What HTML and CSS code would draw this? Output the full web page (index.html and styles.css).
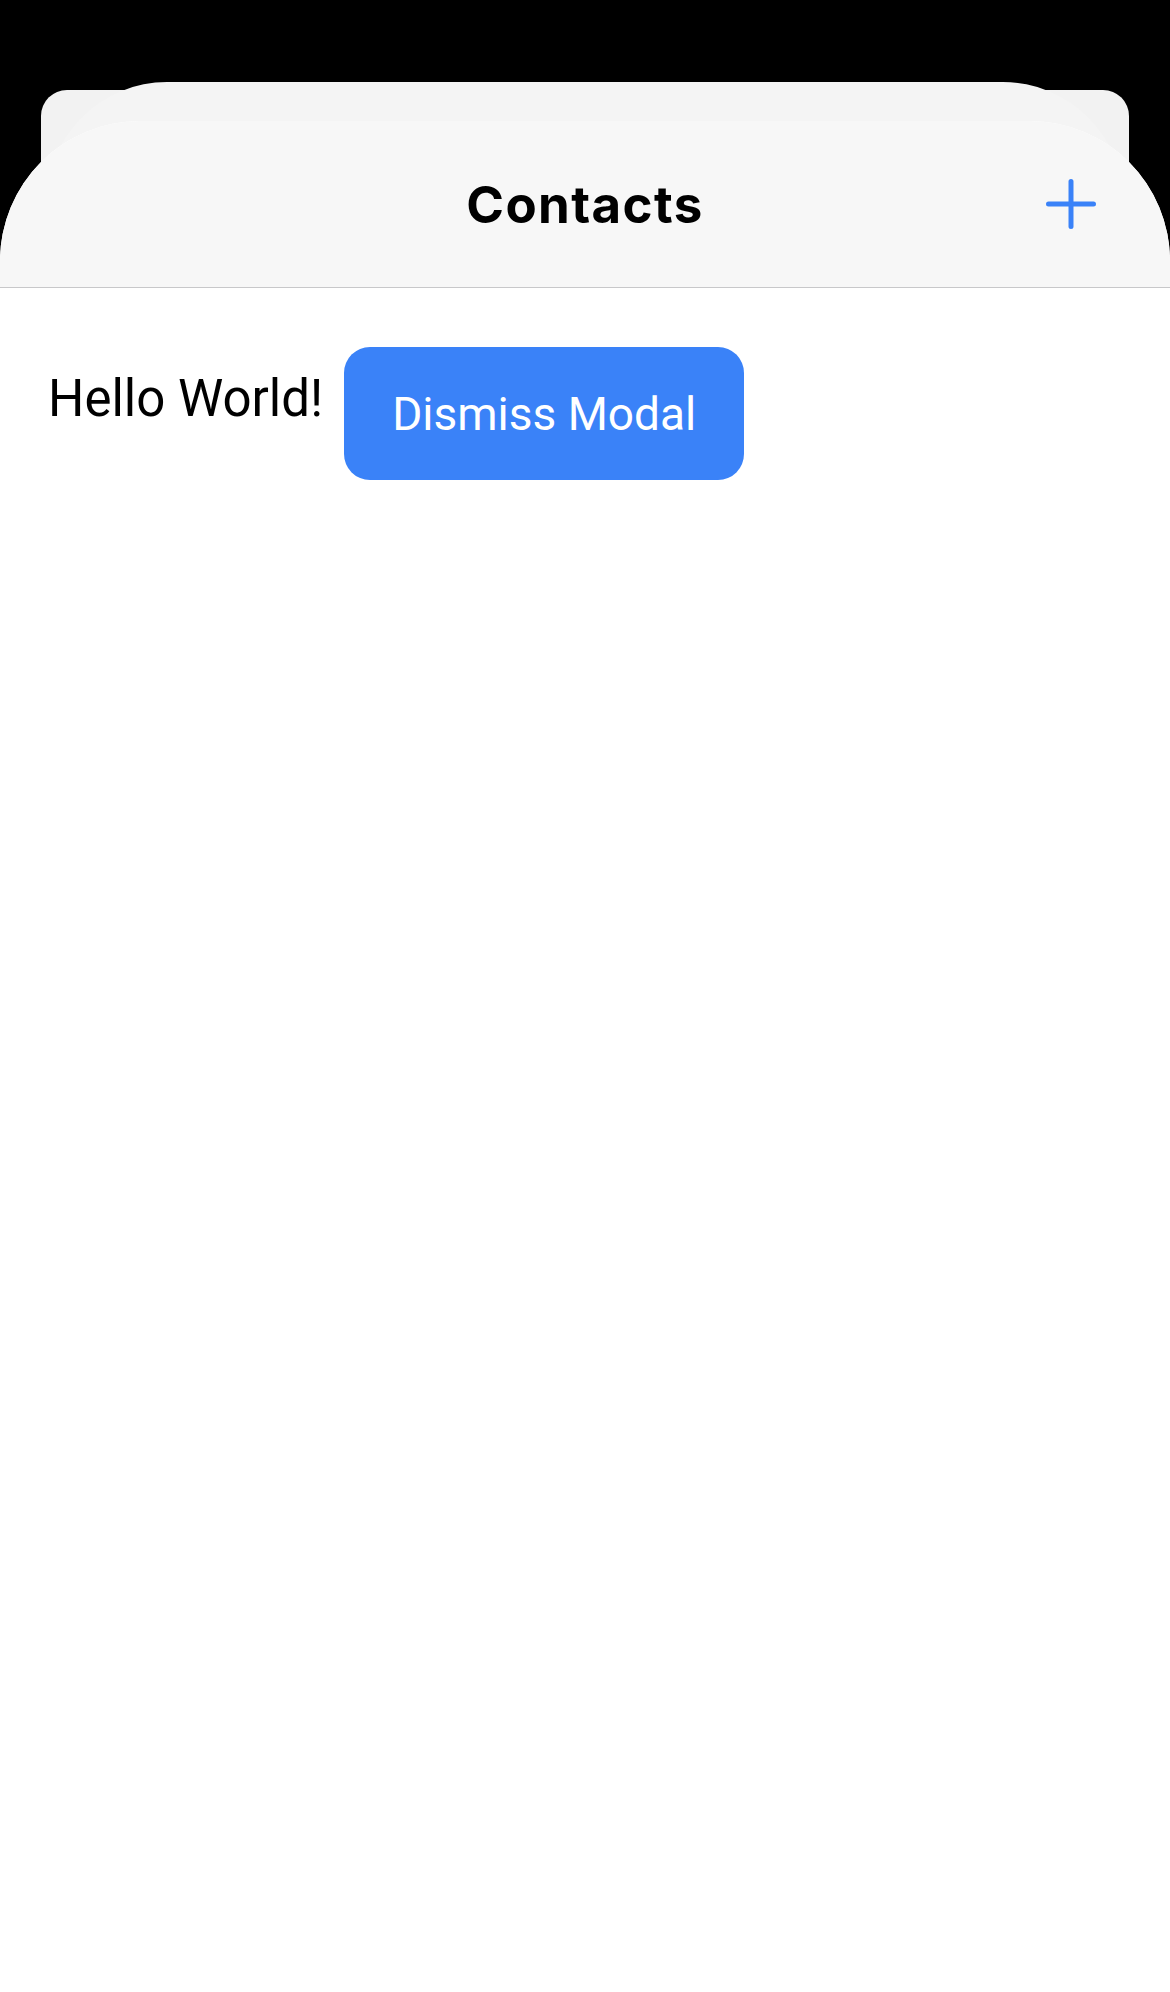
FILE: index.html
```html
<!DOCTYPE html>
<html lang="en">
<head>
<meta charset="utf-8">
<title>Contacts</title>
<link rel="stylesheet" href="styles.css">
</head>
<body>
<div class="stage">
  <div class="card-back"></div>
  <div class="card-middle"></div>
  <div class="sheet">
    <header class="navbar">
      <div class="nav-side"></div>
      <h1 class="nav-title">Contacts</h1>
      <div class="nav-side nav-right">
        <button class="add-btn" aria-label="Add">
          <svg width="52" height="52" viewBox="0 0 52 52">
            <path d="M26 3.5V48.5M3.5 26H48.5" stroke="#3a82f8" stroke-width="5" stroke-linecap="round" fill="none"/>
          </svg>
        </button>
      </div>
    </header>
    <main class="content">
      <p class="hello">Hello World!</p>
      <button class="dismiss">Dismiss Modal</button>
    </main>
  </div>
</div>
</body>
</html>
```
FILE: styles.css
```css
html, body {
  margin: 0;
  padding: 0;
  background: #000;
}
body {
  width: 1170px;
  height: 1992px;
  overflow: hidden;
  font-family: Roboto, "Liberation Sans", sans-serif;
}
.stage {
  position: relative;
  height: 1992px;
  padding-top: 121px;
  box-sizing: border-box;
}
.card-back {
  position: absolute;
  left: 41px;
  top: 90px;
  width: 1088px;
  height: 300px;
  border-radius: 26px;
  background: #f2f2f2;
}
.card-middle {
  position: absolute;
  left: 47px;
  top: 82px;
  width: 1076px;
  height: 300px;
  border-radius: 120px;
  background: #f4f4f4;
}
.sheet {
  position: relative;
  z-index: 1;
  height: 1871px;
  background: #fff;
  border-radius: 140px 140px 0 0;
  overflow: hidden;
}
.navbar {
  height: 166px;
  background: #f7f7f7;
  border-bottom: 1px solid #c8c8ca;
  display: grid;
  grid-template-columns: 1fr auto 1fr;
  align-items: center;
}
.nav-title {
  margin: 0;
  font-family: Inter, "Liberation Sans", sans-serif;
  font-weight: 700;
  font-size: 51px;
  letter-spacing: 1.4px;
  color: #000;
  line-height: 1;
}
.nav-right {
  display: flex;
  justify-content: flex-end;
  padding-right: 73px;
}
.add-btn {
  border: 0;
  padding: 0;
  background: none;
  width: 52px;
  height: 52px;
  display: block;
}
.add-btn svg {
  display: block;
}
.content {
  display: flex;
  align-items: flex-start;
  gap: 21px;
  padding: 59px 48px 0;
}
.hello {
  margin: 22px 0 0;
  font-size: 51px;
  line-height: 60px;
  color: #000;
}
.dismiss {
  height: 133px;
  padding: 0 48px;
  border: 0;
  border-radius: 26px;
  background: #3a82f8;
  color: #fff;
  font-family: Roboto, "Liberation Sans", sans-serif;
  font-size: 46px;
  font-weight: 400;
}
```
